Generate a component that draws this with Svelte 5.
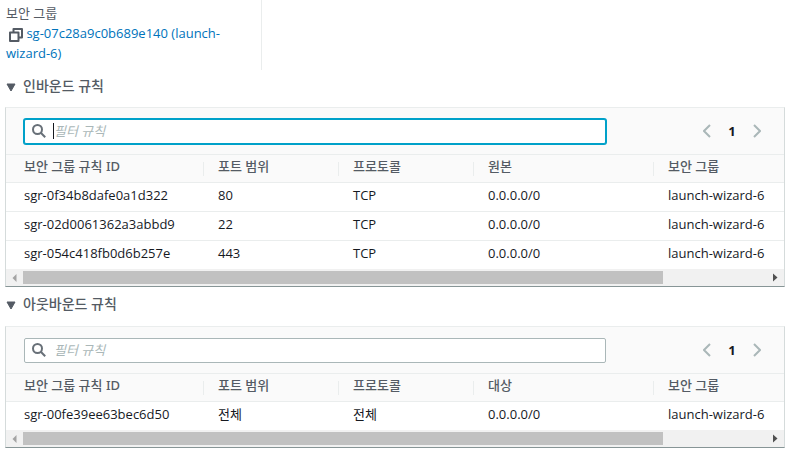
<script>
  const sections = [
    {
      id: 'inbound',
      title: '인바운드 규칙',
      peer: '원본',
      rules: [
        ['sgr-0f34b8dafe0a1d322', '80', 'TCP', '0.0.0.0/0', 'launch-wizard-6'],
        ['sgr-02d0061362a3abbd9', '22', 'TCP', '0.0.0.0/0', 'launch-wizard-6'],
        ['sgr-054c418fb0d6b257e', '443', 'TCP', '0.0.0.0/0', 'launch-wizard-6']
      ]
    },
    {
      id: 'outbound',
      title: '아웃바운드 규칙',
      peer: '대상',
      rules: [['sgr-00fe39ee63bec6d50', '전체', '전체', '0.0.0.0/0', 'launch-wizard-6']]
    }
  ];

  let open = $state({ inbound: true, outbound: true });
  let filters = $state({ inbound: '', outbound: '' });
  let active = $state('inbound');

  function visibleRules(section) {
    const query = filters[section.id].trim().toLowerCase();
    return section.rules.filter((rule) => rule.join(' ').toLowerCase().includes(query));
  }
</script>

<main>
  <div class="summary">
    <div class="label">보안 그룹</div>
    <div class="value">
      <button class="copy" aria-label="복사">
        <svg width="14" height="14" viewBox="0 0 14 14" fill="none" stroke="#545b64" stroke-width="2" stroke-linejoin="round" aria-hidden="true">
          <path d="M1 4.500h8.500V13H1z" />
          <path d="M4.500 4.500V1H13v8.500H9.500" />
        </svg>
      </button>
      <a href="#sg">sg-07c28a9c0b689e140 (launch-wizard-6)</a>
    </div>
  </div>

  {#each sections as section (section.id)}
    <section>
      <button
        class="toggle"
        aria-expanded={open[section.id]}
        onclick={() => (open[section.id] = !open[section.id])}
      >
        <svg class:closed={!open[section.id]} width="10" height="9" viewBox="0 0 10 9" aria-hidden="true">
          <path d="M1 1h8L5 8z" fill="#545b64" stroke="#545b64" stroke-linejoin="round" />
        </svg>
        <span>{section.title}</span>
      </button>

      {#if open[section.id]}
        <div class="card">
          <div class="toolbar">
            <label class="search" class:active={active === section.id}>
              <svg width="14" height="14" viewBox="0 0 14 14" fill="none" stroke="#687078" stroke-width="2" aria-hidden="true">
                <circle cx="5.5" cy="5.5" r="4.5" />
                <path d="M8.8 8.8l4.4 4.4" />
              </svg>
              <span class="caret" class:shown={active === section.id && !filters[section.id]}></span>
              <input
                type="text"
                placeholder="필터 규칙"
                aria-label="필터 규칙"
                bind:value={filters[section.id]}
                onfocus={() => (active = section.id)}
              />
            </label>
            <nav class="pages" aria-label="페이지">
              <button aria-label="이전">
                <svg width="8" height="14" viewBox="0 0 8 14" fill="none" stroke="#aab7b8" stroke-width="2" aria-hidden="true">
                  <path d="M7 1L1 7l6 6" />
                </svg>
              </button>
              <button class="current">1</button>
              <button aria-label="다음">
                <svg width="8" height="14" viewBox="0 0 8 14" fill="none" stroke="#aab7b8" stroke-width="2" aria-hidden="true">
                  <path d="M1 1l6 6-6 6" />
                </svg>
              </button>
            </nav>
          </div>

          <div class="scroller">
            <table>
              <colgroup>
                <col class="col-id" />
                <col class="col-port" />
                <col class="col-port" />
                <col class="col-peer" />
                <col />
              </colgroup>
              <thead>
                <tr>
                  <th><span>보안 그룹 규칙 ID</span></th>
                  <th><span>포트 범위</span></th>
                  <th><span>프로토콜</span></th>
                  <th><span>{section.peer}</span></th>
                  <th><span>보안 그룹</span></th>
                </tr>
              </thead>
              <tbody>
                {#each visibleRules(section) as rule (rule[0])}
                  <tr>
                    {#each rule as cell}
                      <td>{cell}</td>
                    {/each}
                  </tr>
                {/each}
              </tbody>
            </table>
          </div>

          <div class="scrollbar" aria-hidden="true">
            <svg width="17" height="17" viewBox="0 0 17 17"><path d="M10.5 5v8l-4-4z" fill="#a3a3a3" /></svg>
            <div class="track"><div class="thumb"></div></div>
            <svg width="17" height="17" viewBox="0 0 17 17"><path d="M6 4.500v8l4.500-4z" fill="#505050" /></svg>
          </div>
        </div>
      {/if}
    </section>
  {/each}
</main>

<style>
  :global(body) {
    margin: 0;
    background: #fff;
  }

  main {
    padding: 0 4px 0 5px;
    font-family: 'Open Sans', 'Noto Sans CJK KR', sans-serif;
    font-size: 13px;
    line-height: 20px;
    color: #16191f;
  }

  button {
    padding: 0;
    border: none;
    background: none;
    font: inherit;
    color: inherit;
    cursor: pointer;
  }

  svg {
    display: block;
    flex-shrink: 0;
  }

  .summary {
    box-sizing: border-box;
    width: 33%;
    height: 70px;
    padding: 3px 32px 0 1px;
    border-right: 1px solid #eaeded;
  }

  .label {
    color: #545b64;
  }

  .copy {
    margin-left: 3px;
    vertical-align: -4px;
  }

  a {
    color: #0073bb;
    text-decoration: none;
  }

  .toggle {
    display: flex;
    align-items: center;
    gap: 7px;
    height: 37px;
    padding: 0 0 6px 1px;
    font-size: 14px;
    font-weight: 500;
    color: #545b64;
  }

  .toggle svg {
    margin-top: 4px;
  }

  .closed {
    transform: rotate(-90deg);
  }

  section + section .toggle {
    height: 39px;
  }

  .card {
    border: 1px solid #d5dbdb;
    border-top-color: #eaeded;
    border-bottom-color: #879596;
    overflow: hidden;
  }

  .toolbar {
    display: flex;
    align-items: center;
    justify-content: space-between;
    height: 46px;
    padding: 0 23px 0 18px;
    background: #fafafa;
    border-bottom: 1px solid #eaeded;
  }

  .search {
    box-sizing: border-box;
    display: flex;
    align-items: center;
    width: 79%;
    height: 25px;
    padding: 0 7px;
    border: 1px solid #aab7b8;
    border-radius: 2px;
    background: #fff;
  }

  .search.active {
    border-color: #00a1c9;
    box-shadow: 0 0 0 1px #00a1c9;
  }

  .caret {
    width: 1px;
    height: 16px;
    margin-left: 7px;
  }

  .caret.shown {
    background: #16191f;
  }

  input {
    flex: 1;
    min-width: 0;
    padding: 0;
    border: none;
    outline: none;
    background: none;
    font: inherit;
    color: inherit;
  }

  input::placeholder {
    color: #aab7b8;
    font-style: italic;
    opacity: 1;
  }

  .pages {
    display: flex;
    align-items: center;
    gap: 17px;
  }

  .current {
    width: 8px;
    font-weight: 700;
  }

  .scroller {
    overflow: hidden;
  }

  table {
    width: 117%;
    table-layout: fixed;
    border-collapse: separate;
    border-spacing: 0;
  }

  .col-id {
    width: 197px;
  }

  .col-port {
    width: 135px;
  }

  .col-peer {
    width: 180px;
  }

  th,
  td {
    box-sizing: border-box;
    height: 29px;
    padding: 0 0 4px;
    line-height: 16px;
    text-align: left;
    white-space: nowrap;
    border-bottom: 1px solid #eaeded;
  }

  th {
    height: 28px;
    padding: 0;
    background: #fafafa;
    font-family: 'Noto Sans', 'Noto Sans CJK KR', sans-serif;
    font-weight: 500;
    color: #545b64;
  }

  th span {
    display: block;
    height: 14px;
    padding-left: 14px;
    border-left: 1px solid #eaeded;
    line-height: 8px;
  }

  th:first-child span {
    padding-left: 18px;
    border-left: none;
  }

  td {
    padding-left: 15px;
  }

  td:first-child {
    padding-left: 18px;
  }

  tbody tr:last-child td {
    height: 28px;
    border-bottom: none;
  }

  .scrollbar {
    display: flex;
    height: 17px;
    background: #f1f1f1;
  }

  .track {
    flex: 1;
    padding: 2px 0;
  }

  .thumb {
    width: 86%;
    height: 13px;
    background: #c1c1c1;
  }
</style>
